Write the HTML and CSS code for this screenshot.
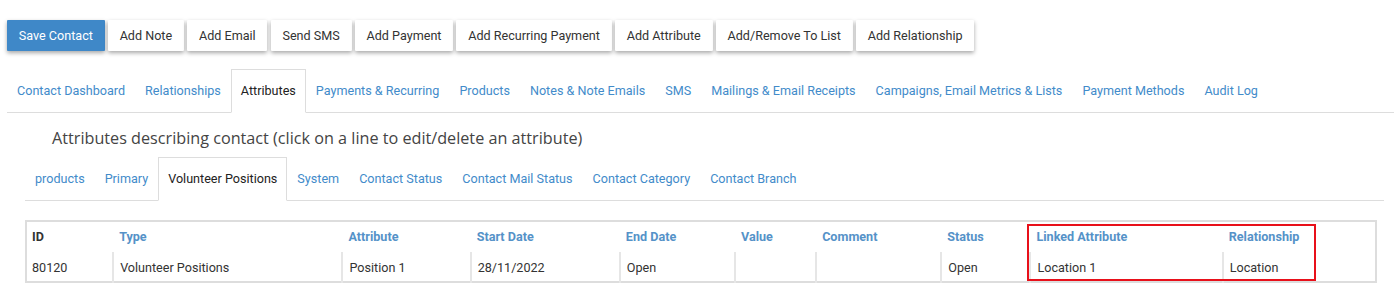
FILE: index.html
```html
<!DOCTYPE html>
<html lang="en">
  <head>
    <meta charset="UTF-8" />
    <meta name="viewport" content="width=device-width, initial-scale=1.0" />
    <title>Contact Attributes</title>
    <link rel="stylesheet" href="styles.css">
  </head>
  <body>
    <div class="page">
      <div class="toolbar">
        <button class="btn btn-primary">Save Contact</button>
        <button class="btn">Add Note</button>
        <button class="btn">Add Email</button>
        <button class="btn">Send SMS</button>
        <button class="btn">Add Payment</button>
        <button class="btn">Add Recurring Payment</button>
        <button class="btn">Add Attribute</button>
        <button class="btn">Add/Remove To List</button>
        <button class="btn">Add Relationship</button>
      </div>

      <ul class="tabs">
        <li><a href="#">Contact Dashboard</a></li>
        <li><a href="#">Relationships</a></li>
        <li class="active"><a href="#">Attributes</a></li>
        <li><a href="#">Payments &amp; Recurring</a></li>
        <li><a href="#">Products</a></li>
        <li><a href="#">Notes &amp; Note Emails</a></li>
        <li><a href="#">SMS</a></li>
        <li><a href="#">Mailings &amp; Email Receipts</a></li>
        <li><a href="#">Campaigns, Email Metrics &amp; Lists</a></li>
        <li><a href="#">Payment Methods</a></li>
        <li><a href="#">Audit Log</a></li>
      </ul>

      <div class="attributes">
        <h3 class="section-title">Attributes describing contact (click on a line to edit/delete an attribute)</h3>

        <ul class="tabs subtabs">
          <li><a href="#">products</a></li>
          <li><a href="#">Primary</a></li>
          <li class="active"><a href="#">Volunteer Positions</a></li>
          <li><a href="#">System</a></li>
          <li><a href="#">Contact Status</a></li>
          <li><a href="#">Contact Mail Status</a></li>
          <li><a href="#">Contact Category</a></li>
          <li><a href="#">Contact Branch</a></li>
        </ul>

        <div class="table-wrap">
          <table class="attr-table">
            <colgroup>
              <col style="width: 87px" />
              <col style="width: 229px" />
              <col style="width: 128px" />
              <col style="width: 149px" />
              <col style="width: 115px" />
              <col style="width: 81px" />
              <col style="width: 125px" />
              <col style="width: 89px" />
              <col style="width: 192px" />
              <col style="width: 153px" />
            </colgroup>
            <thead>
              <tr>
                <th class="plain">ID</th>
                <th>Type</th>
                <th>Attribute</th>
                <th>Start Date</th>
                <th>End Date</th>
                <th>Value</th>
                <th>Comment</th>
                <th>Status</th>
                <th>Linked Attribute</th>
                <th>Relationship</th>
              </tr>
            </thead>
            <tbody>
              <tr>
                <td>80120</td>
                <td>Volunteer Positions</td>
                <td>Position 1</td>
                <td>28/11/2022</td>
                <td>Open</td>
                <td></td>
                <td></td>
                <td>Open</td>
                <td>Location 1</td>
                <td>Location</td>
              </tr>
            </tbody>
          </table>
          <div class="highlight"></div>
        </div>
      </div>
    </div>
  </body>
</html>
```

FILE: styles.css
```css
html,
body {
  margin: 0;
  background-color: white;
  font-family: Roboto, Arial, sans-serif;
  font-size: 12.6px;
  color: #333;
}

.page {
  padding: 20px 0 0 7px;
}

/* action buttons */
.toolbar {
  display: flex;
  gap: 3.2px;
}
.btn {
  height: 31px;
  padding: 0 11.8px;
  border: none;
  border-radius: 1px;
  background-color: white;
  color: #333;
  font-family: Roboto, Arial, sans-serif;
  font-size: 12.6px;
  box-shadow: 0 2px 4px rgba(0, 0, 0, 0.35);
  cursor: pointer;
}
.btn-primary {
  background-color: #3f88c8;
  color: white;
}

/* tabs */
.tabs {
  display: flex;
  list-style: none;
  margin: 18px 0 0 0;
  padding: 0;
  border-bottom: 1px solid #ddd;
}
.tabs li {
  margin-bottom: -1px;
  border: 1px solid transparent;
}
.tabs a {
  display: block;
  padding: 12px 9px 13px 9px;
  line-height: 17px;
  color: #428bca;
  text-decoration: none;
}
.tabs li.active {
  border-color: #ddd;
  border-bottom-color: white;
  background-color: white;
}
.tabs li.active a {
  color: #222;
}

.attributes {
  padding-left: 18px;
}
.section-title {
  margin: 14px 0 0 27px;
  font-family: "Open Sans", Arial, sans-serif;
  font-size: 16.2px;
  font-weight: normal;
  line-height: 23px;
  color: #444;
}
.subtabs {
  margin-top: 7px;
  margin-right: 10px;
}

/* table */
.table-wrap {
  position: relative;
  margin-top: 19px;
  width: 1352px;
}
.attr-table {
  width: 100%;
  table-layout: fixed;
  border-collapse: collapse;
  border: 2px solid #ddd;
}
.attr-table th {
  text-align: left;
  padding: 7px 6px 7px 6px;
  height: 16px;
  line-height: 16px;
  color: #5592c8;
  font-weight: bold;
}
.attr-table th.plain {
  color: #333;
}
.attr-table td {
  padding: 8px 6px 5px 6px;
  height: 16px;
  line-height: 16px;
  border-left: 2px solid #e6e6e6;
  white-space: nowrap;
}
.attr-table td:first-child {
  border-left: none;
  padding-left: 5px;
}
.attr-table th:first-child {
  padding-left: 5px;
}

/* red box drawn over the linked attribute columns */
.highlight {
  position: absolute;
  left: 1002px;
  top: 4px;
  width: 285px;
  height: 53px;
  border: 2px solid #e8101a;
}
```
